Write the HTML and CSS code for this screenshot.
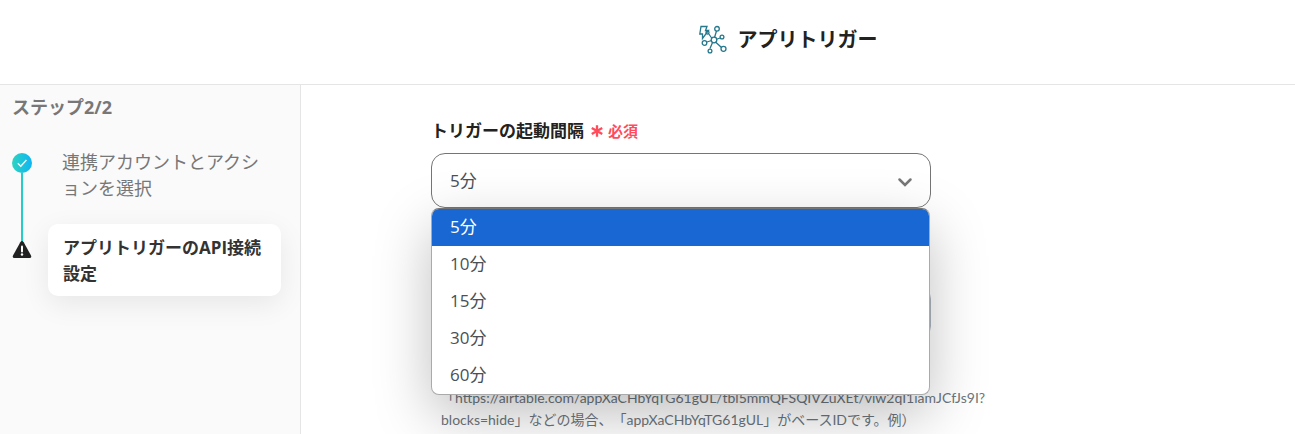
FILE: index.html
```html
<!DOCTYPE html>
<html lang="ja">
<head>
  <meta charset="UTF-8">
  <meta name="viewport" content="width=device-width, initial-scale=1">
  <title>アプリトリガー</title>
  <link rel="stylesheet" href="styles.css">
</head>
<body>
  <header class="header">
    <svg class="header-icon" viewBox="0 0 30 30" aria-hidden="true">
      <path d="M3 1.500h6L7.500 5.500h3L4.500 13.500V9H1.800z"/>
      <path d="M16.500 12.500L18.500 6M18 14.500l4-1.500M14 13.500L10.500 8.500M13.500 15.500L9 17M14.500 17.500l-2.500 6M17.500 17l6 5.500"/>
      <circle cx="16" cy="15" r="2.800"/>
      <circle cx="19" cy="3.800" r="2.300"/>
      <circle cx="24" cy="12" r="1.900"/>
      <circle cx="9.500" cy="7.500" r="1.500"/>
      <circle cx="6.500" cy="18" r="2.300"/>
      <circle cx="12" cy="26" r="1.900"/>
      <circle cx="25.500" cy="23.800" r="2.500"/>
    </svg>
    <h1 class="header-title">アプリトリガー</h1>
  </header>

  <div class="layout">
    <aside class="sidebar">
      <h2 class="step-count">ステップ2/2</h2>
      <ol class="steps">
        <li class="step">
          <div class="step-mark">
            <svg class="step-icon" viewBox="0 0 20 20" aria-hidden="true">
              <defs>
                <linearGradient id="doneFill">
                  <stop offset="0" stop-color="#2bd4c0"/>
                  <stop offset="1" stop-color="#10b4f4"/>
                </linearGradient>
              </defs>
              <circle cx="10" cy="10" r="10" fill="url(#doneFill)"/>
              <path d="M5.800 10.300l3 3 5.600-6.300" fill="none" stroke="#fff" stroke-width="1.300"/>
            </svg>
            <span class="step-line"></span>
          </div>
          <div class="step-label">連携アカウントとアクションを選択</div>
        </li>
        <li class="step step-current">
          <div class="step-mark">
            <svg class="step-icon" viewBox="0 0 20 20" aria-hidden="true">
              <path d="M8.300 2.200Q10 0 11.700 2.200L19 15.500Q20 18 17.500 18H2.500Q0 18 1 15.500z" fill="#222"/>
              <path d="M10 6.500v5" stroke="#fff" stroke-width="2" stroke-linecap="round"/>
              <circle cx="10" cy="14.500" r="1.200" fill="#fff"/>
            </svg>
          </div>
          <div class="step-label">アプリトリガーのAPI接続設定</div>
        </li>
      </ol>
    </aside>

    <main class="main">
      <form class="form">
        <div class="field">
          <label class="field-label" for="interval">トリガーの起動間隔
            <span class="required">
              <svg class="required-icon" viewBox="0 0 12 12" aria-hidden="true">
                <path d="M6 1v10M1.500 3.500l9 5M10.500 3.500l-9 5"/>
              </svg>必須
            </span>
          </label>
          <div class="select-wrap">
            <select class="control" id="interval">
              <option>5分</option>
              <option>10分</option>
              <option>15分</option>
              <option>30分</option>
              <option>60分</option>
            </select>
            <svg class="select-arrow" viewBox="0 0 16 16" aria-hidden="true">
              <path d="M2.500 5.500L8 11l5.500-5.500"/>
            </svg>
            <div class="menu" role="listbox" aria-label="トリガーの起動間隔">
              <button class="menu-item active" type="button" role="option" aria-selected="true">5分</button>
              <button class="menu-item" type="button" role="option" aria-selected="false">10分</button>
              <button class="menu-item" type="button" role="option" aria-selected="false">15分</button>
              <button class="menu-item" type="button" role="option" aria-selected="false">30分</button>
              <button class="menu-item" type="button" role="option" aria-selected="false">60分</button>
            </div>
          </div>
        </div>

        <div class="field">
          <input class="control control-light" id="baseId" type="text" aria-label="ベースID" aria-describedby="baseHelp">
          <p class="help" id="baseHelp">「https://airtable.com/appXaCHbYqTG61gUL/tbl5mmQFSQIVZuXEt/viw2qI1iamJCfJs9I?<wbr>blocks=hide」などの場合、「appXaCHbYqTG61gUL」がベースIDです。例）</p>
        </div>
      </form>
    </main>
  </div>
</body>
</html>
```
FILE: styles.css
```css
:root {
  --text: #222;
  --muted: #777;
  --line: #e5e5e5;
  --blue: #1967d2;
  --teal: #23cdc9;
  --red: #ff4b5c;
}
* {
  margin: 0;
  padding: 0;
  box-sizing: border-box;
}
body {
  display: flex;
  flex-direction: column;
  height: 100vh;
  overflow: hidden;
  background: #fff;
  color: var(--text);
  font-family: "Open Sans", "Noto Sans CJK JP", sans-serif;
  font-size: 17px;
  text-spacing-trim: space-all;
}
button, input, select {
  font: inherit;
}

/* Header */
.header {
  display: flex;
  align-items: center;
  justify-content: center;
  gap: 10px;
  flex-shrink: 0;
  padding: 25px 0 29px 280px;
  border-bottom: 1px solid var(--line);
}
.header-icon {
  width: 30px;
  height: 30px;
  fill: none;
  stroke: #26788c;
  stroke-width: 1.3;
}
.header-title {
  font-size: 20px;
  line-height: 30px;
}
.layout {
  display: flex;
  flex: 1;
  min-height: 0;
}

/* Sidebar */
.sidebar {
  flex-shrink: 0;
  width: 301px;
  padding: 8px 19px 0 12px;
  background: #fafafa;
  border-right: 1px solid var(--line);
}
.step-count {
  color: var(--muted);
  font-size: 18px;
  line-height: 28px;
}
.steps {
  margin-top: 28px;
  list-style: none;
}
.step {
  display: flex;
  gap: 16px;
}
.step-mark {
  display: flex;
  flex-direction: column;
  align-items: center;
  width: 20px;
  padding-top: 4px;
}
.step-icon {
  flex-shrink: 0;
  width: 20px;
  height: 20px;
}
.step-line {
  flex: 1;
  width: 2px;
  background: var(--teal);
}
.step-label {
  flex: 1;
  padding: 0 14px 23px;
  color: var(--muted);
  font-size: 18px;
  line-height: 26px;
}
.step-current .step-mark {
  background: linear-gradient(var(--teal), var(--teal)) top / 2px 18px no-repeat;
  padding-top: 16px;
}
.step-current .step-label {
  padding: 11px 15px 9px;
  border-radius: 10px;
  background: #fff;
  box-shadow: 0 8px 28px rgba(0, 0, 0, 0.08);
  color: #333;
  font-size: 17px;
  font-weight: 700;
}

/* Form */
.main {
  flex: 1;
  min-width: 0;
  padding: 32px 130px 0;
}
.form {
  max-width: 560px;
}
.field + .field {
  margin-top: 77px;
}
.field-label {
  display: flex;
  align-items: center;
  gap: 6px;
  margin-bottom: 8px;
  font-weight: 700;
  line-height: 28px;
}
.required {
  display: inline-flex;
  align-items: center;
  gap: 4px;
  color: var(--red);
  font-size: 15px;
}
.required-icon {
  width: 14px;
  height: 14px;
  stroke: currentColor;
  stroke-width: 2;
}
.select-wrap {
  position: relative;
  max-width: 500px;
}
.control {
  display: block;
  width: 100%;
  max-width: 500px;
  height: 55px;
  padding: 0 18px;
  border: 1px solid #757575;
  border-radius: 14px;
  background: #fff;
  color: #495057;
  appearance: none;
}
.control-light {
  border-color: #adb5bd;
}
.select-arrow {
  position: absolute;
  top: 21px;
  right: 18px;
  width: 16px;
  height: 16px;
  fill: none;
  stroke: #777;
  stroke-width: 2.5;
  stroke-linecap: round;
}
.menu {
  position: absolute;
  top: 100%;
  left: 0;
  z-index: 1;
  width: calc(100% - 1px);
  overflow: hidden;
  border: 1px solid #aaa;
  border-top-color: #757575;
  border-radius: 8px;
  background: #fff;
  box-shadow: 0 20px 56px rgba(0, 0, 0, 0.25);
}
.menu-item {
  display: block;
  width: 100%;
  height: 37px;
  padding: 0 18px 5px;
  border: 0;
  background: none;
  color: #495057;
  text-align: left;
}
.menu-item.active {
  background: var(--blue);
  color: #fff;
}
.help {
  padding: 47px 10px 0;
  color: #6c757d;
  font-family: Lato, "Noto Sans CJK JP", sans-serif;
  font-size: 14px;
  line-height: 22px;
}
```
